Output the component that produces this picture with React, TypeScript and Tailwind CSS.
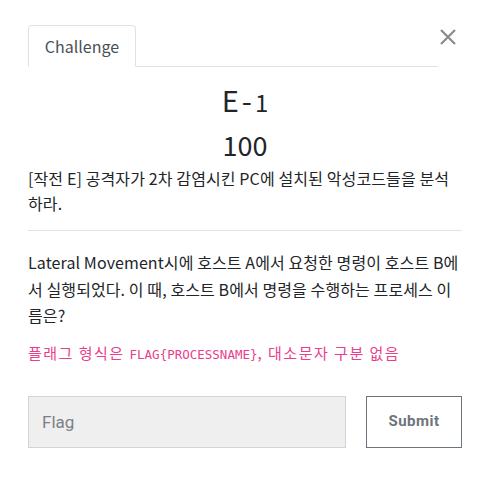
const FONT = "font-['Noto_Sans_CJK_KR','Noto_Sans',sans-serif]";

export default function App() {
  return (
    <div className={`w-[482px] h-[490px] bg-white text-[#212529] ${FONT}`}>
      <div className="relative pl-[28px] pr-[20px] pt-[25px]">
        <button className="absolute right-[24px] top-[27px] text-[#8a8a8a]" aria-label="close">
          <svg width="20" height="20" viewBox="0 0 20 20" fill="none" stroke="currentColor" strokeWidth="2.2">
            <path d="M3 3 L17 17 M17 3 L3 17" />
          </svg>
        </button>
        <div className="flex w-[410px] border-b border-[#dee2e6]">
          <div className="-mb-px h-[42px] w-[108px] rounded-t-[4px] border border-b-white border-[#dee2e6] bg-white flex items-center justify-center text-[16px] text-[#495057]">
            Challenge
          </div>
        </div>

        <div className="pt-[14px] text-center">
          <h3 className="text-[29px] leading-[36px] font-normal">
            E<span className="mx-[3px]">-</span><span className="text-[24px]">1</span>
          </h3>
          <p className="mt-[8px] text-[27px] leading-[34px]">100</p>
        </div>

        <p className="mt-[4px] text-[16px] leading-[25px] tracking-[0.12px] break-all">
          [작전 E] 공격자가 2차 감염시킨 PC에 설치된 악성코드들을 분석하라.
        </p>
        <hr className="mt-[14px] border-[#e3e3e3]" />
        <p className="mt-[18px] text-[16px] leading-[26.5px] tracking-[0.1px] break-all">
          Lateral Movement시에 호스트 A에서 요청한 명령이 호스트 B에서 실행되었다. 이 때, 호스트 B에서 명령을 수행하는 프로세스 이름은?
        </p>
        <p className="mt-[14px] text-[15px] leading-[20px] tracking-[1.5px] text-[#e83e8c]">
          플래그 형식은 <code className="font-['DejaVu_Sans_Mono',monospace] text-[12.5px] tracking-normal">FLAG{"{"}PROCESSNAME{"}"}</code>, 대소문자 구분 없음
        </p>

        <div className="mt-[31px] flex gap-[20px]">
          <input
            placeholder="Flag"
            className="h-[52px] min-w-0 flex-1 border border-[#ced4da] bg-[#efefef] px-[13px] text-[17px] font-['Roboto',sans-serif] placeholder:text-[#7b8087] outline-none"
          />
          <button className="h-[52px] w-[96px] shrink-0 border border-[#6c757d] bg-white text-[15px] font-bold font-['Roboto',sans-serif] text-[#6c757d] tracking-[0.5px]">
            Submit
          </button>
        </div>
      </div>
    </div>
  );
}
